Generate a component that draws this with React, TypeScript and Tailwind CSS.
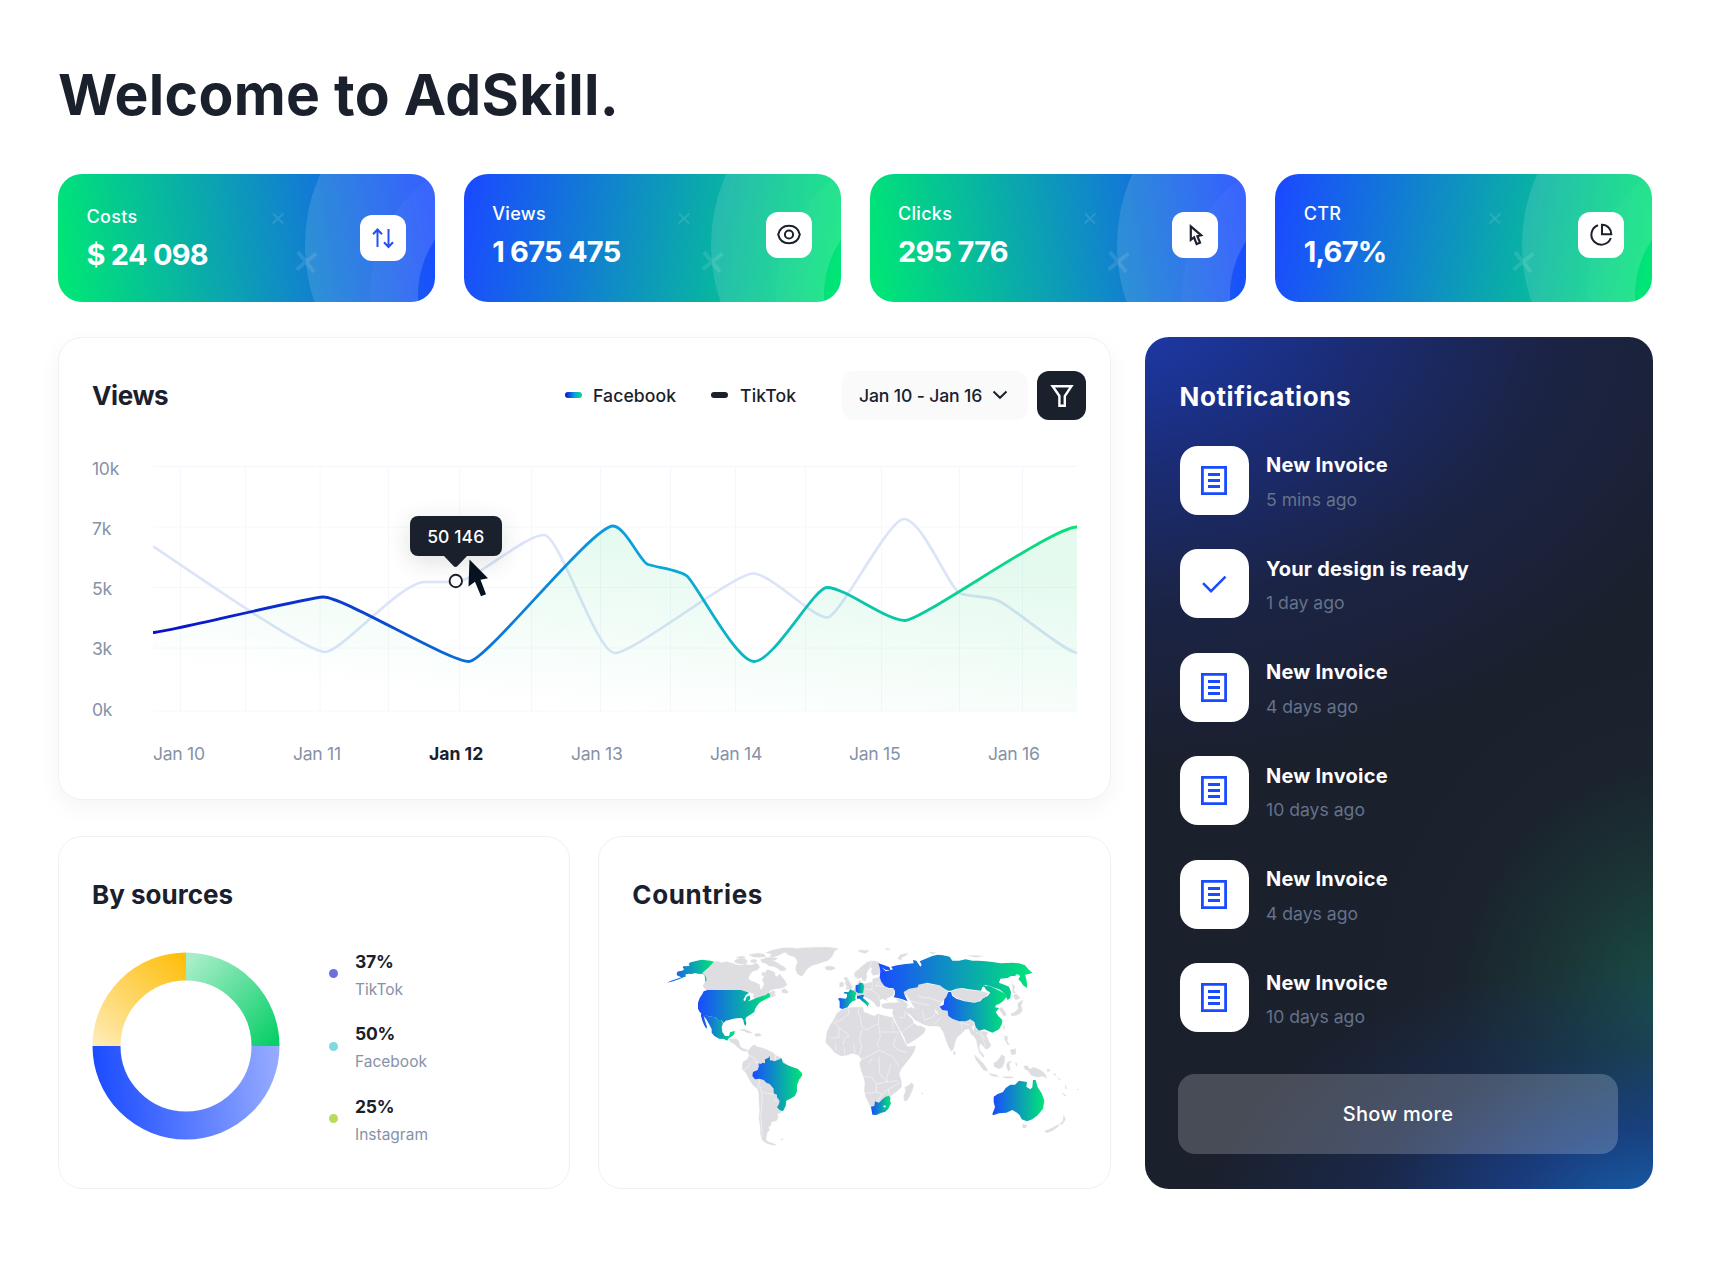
import type { ReactNode } from "react";

const INK = "#1b202d";

/* ---------- Stat cards ---------- */

function ArrowsIcon() {
  return (
    <svg width="26" height="26" viewBox="0 0 26 26" fill="none" stroke="#2450f5" strokeWidth="2">
      <path d="M7.5 22V4.5M3 9.2l4.5-4.7L12 9.2M18.500 4v17.5M14 17.3l4.500 4.7L23 17.3" />
    </svg>
  );
}

function EyeIcon() {
  return (
    <svg width="26" height="26" viewBox="0 0 26 26" fill="none" stroke={INK} strokeWidth="2">
      <path d="M2.200 12.500C3.500 6.800 7.700 3.700 13 3.700s9.500 3.100 10.800 8.800C22.500 18.200 18.300 21.300 13 21.300S3.500 18.200 2.200 12.500Z" />
      <circle cx="13" cy="12.500" r="4.100" />
    </svg>
  );
}

function PointerIcon() {
  return (
    <svg width="26" height="26" viewBox="0 0 26 26" fill="none" stroke={INK} strokeWidth="2.200" strokeLinejoin="miter">
      <path d="M8.800 4.400v13.400l3.300-2.500 2.500 6.800 3.400-1.400-2.600-6.500 3.800-.9Z" />
    </svg>
  );
}

function PieIcon() {
  return (
    <svg width="26" height="26" viewBox="0 0 26 26" fill="none" stroke={INK} strokeWidth="2">
      <path d="M10 3.200A10 10 0 1 0 22.800 16M14 2.700V12.200h9.300C23.300 7 19.200 2.700 14 2.700Z" />
    </svg>
  );
}

interface StatProps {
  label: string;
  value: string;
  icon: ReactNode;
  tone: string;
  shift?: string;
}

function StatCard({ label, value, icon, tone, shift = "pt-[28px]" }: StatProps) {
  return (
    <div className={`relative flex h-[128px] items-start justify-between overflow-hidden rounded-[24px] pr-[28.500px] pl-[28.500px] text-white ${shift} ${tone}`}>
      <svg className="absolute inset-0" width="377" height="128" viewBox="0 0 377 128" fill="none">
        <path
          fillRule="evenodd"
          fill="#fff"
          fillOpacity="0.12"
          d="M247 71a174 174 0 1 0 348 0a174 174 0 1 0 -348 0ZM360 121a98 98 0 1 0 196 0a98 98 0 1 0 -196 0Z"
        />
        <circle cx="458" cy="121" r="122" stroke="#fff" strokeOpacity="0.030" strokeWidth="48" />
        <path d="m215 39.500 10 10M225.500 39.500l-11 10" stroke="#fff" strokeOpacity="0.120" strokeWidth="1.800" />
        <path d="m240 78 16 20M258.500 79.500l-20 16" stroke="#fff" strokeOpacity="0.110" strokeWidth="4" />
      </svg>
      <div className="relative">
        <div className="text-[18px] leading-6 font-medium tracking-[0.300px]">{label}</div>
        <div className="mt-[7.500px] text-[29px] leading-9 font-bold tracking-[-0.750px] whitespace-nowrap">{value}</div>
      </div>
      <div className="relative mt-[10px] flex size-[46px] items-center justify-center rounded-[12px] bg-white">{icon}</div>
    </div>
  );
}

/* ---------- Views chart ---------- */

const GRID_X = [180.5, 245.5, 320, 388.5, 459.5, 531.5, 600.5, 670.5, 735.5, 805.5, 881.5, 959.5, 1022.5];
const GRID_Y = [466.500, 527, 587.500, 648, 711];
const FACEBOOK =
  "M153 632.500C166 632.500 304 598 323 597C342 596 448 661.500 469 661.500C486 661.500 592 526 613 526C625 526 641 563 648 564.500C660 568 680 570 687 576C697 585 736 661.500 754 661.500C774 661.500 814 587.500 827 587.500C845 587.500 886 620.500 905 620.500C922 620.500 1052 527 1077 527";
const TIKTOK =
  "M153 546.500C166 554 304 652 325 652C342 652 400 582 425 582L455 582C474 582 524 535 544 535C560 535 596 653 615 653C634 653 734 573.500 753 573.500C771 573.500 812 617.500 827 617.500C840 617.500 888 519 904 519C922 519 949 588 960 593.500C971 597 990 596 999 601C1015 609 1062 650 1077 653";

function Chart() {
  return (
    <svg width="926" height="264" viewBox="153 456 926 264" fill="none" className="block">
      <defs>
        <linearGradient id="line" x1="153" y1="0" x2="1077" y2="0" gradientUnits="userSpaceOnUse">
          <stop stopColor="#0a0fc8" />
          <stop offset="0.22" stopColor="#0d40cf" />
          <stop offset="0.35" stopColor="#0a72d8" />
          <stop offset="0.5" stopColor="#0b9de0" />
          <stop offset="0.68" stopColor="#0cbcbc" />
          <stop offset="0.84" stopColor="#09cd9b" />
          <stop offset="1" stopColor="#0adf78" />
        </linearGradient>
        <linearGradient id="area" x1="590" y1="526" x2="570" y2="711" gradientUnits="userSpaceOnUse">
          <stop stopColor="#0cce6b" stopOpacity="0.110" />
          <stop offset="0.5" stopColor="#0cce6b" stopOpacity="0.055" />
          <stop offset="1" stopColor="#0cce6b" stopOpacity="0" />
        </linearGradient>
      </defs>
      <g stroke="#f4f8fc">
        {GRID_Y.map((y) => (
          <path key={y} d={`M153 ${y}H1077`} />
        ))}
        {GRID_X.map((x) => (
          <path key={x} d={`M${x} 466V711`} />
        ))}
      </g>
      <path d={TIKTOK} stroke="#dbe4f8" strokeWidth="2.700" />
      <path d={`${FACEBOOK}V711H153Z`} fill="url(#area)" />
      <path d={FACEBOOK} stroke="url(#line)" strokeWidth="2.800" />
      <circle cx="455.800" cy="581" r="6.200" fill="#fff" stroke={INK} strokeWidth="1.900" />
    </svg>
  );
}

function ChartTooltip() {
  return (
    <div className="absolute top-[60px] left-[257px]">
      <div className="flex h-[40.500px] w-[91.500px] items-center justify-center rounded-[8px] bg-[#1b202d] pt-[1.500px] text-[17.500px] font-medium tracking-[0.100px] text-white shadow-[0_6px_24px_rgba(27,32,45,0.14)]">
        50 146
      </div>
      <svg className="absolute top-[40px] left-[34px] overflow-visible" width="46" height="44" viewBox="0 0 46 44">
        <path d="M0 0h23L13.500 10q-2 2-4 0Z" fill={INK} />
        <path d="M25.500 3.500 44 22.200l-7.500 1.600 5.500 14.500-5 2-6-14.500-6.500 4.700Z" fill="#06121f" />
      </svg>
    </div>
  );
}

const DAYS = ["Jan 10", "Jan 11", "Jan 12", "Jan 13", "Jan 14", "Jan 15", "Jan 16"];

function ViewsCard() {
  return (
    <section className="h-[463px] rounded-[24px] border-[1.500px] border-[#edf2f9] bg-white pt-[33px] pl-[33px] shadow-[0_8px_24px_rgba(27,32,45,0.045)]">
      <header className="flex h-[49px] items-center pr-[23.500px] text-[17.600px] font-medium whitespace-nowrap text-[#1b202d]">
        <h2 className="pt-[2px] text-[26px] leading-8 font-bold tracking-[-0.400px]">Views</h2>
        <div className="ml-auto flex items-center">
          <span className="h-[6px] w-[17px] rounded-full bg-[linear-gradient(90deg,#0a0fc8,#0b9de0_55%,#0adf78)]" />
          <span className="ml-[11px] w-[84px] pt-[2px] tracking-[0.100px]">Facebook</span>
          <span className="ml-[34px] h-[6px] w-[17px] rounded-full bg-[#1b202d]" />
          <span className="ml-[12px] w-[56px] pt-[2px] tracking-[0.150px]">TikTok</span>
          <div className="ml-[46px] flex h-[49px] w-[186px] items-center rounded-[12px] bg-[#fafafa] pl-[17px]">
            <span className="w-[124px] pt-[2px] tracking-[-0.150px]">Jan 10 - Jan 16</span>
            <svg className="ml-[9px]" width="16" height="10" viewBox="0 0 16 10" fill="none" stroke={INK} strokeWidth="2">
              <path d="m1.500 1.500 6.500 6.300 6.500-6.300" />
            </svg>
          </div>
          <div className="ml-[9px] flex size-[49px] items-center justify-center rounded-[12px] bg-[#1b202d]">
            <svg className="mt-[2px]" width="24" height="24" viewBox="0 0 24 24" fill="none" stroke="#fff" strokeWidth="2.400">
              <path d="M2.600 2.300h18.800L14.800 12v9.700H9.400V12Z" />
            </svg>
          </div>
        </div>
      </header>
      <div className="mt-[36px] flex text-[17.600px] leading-6 text-[#8592a8]">
        <div className="mt-px flex h-[265px] w-[61px] flex-col justify-between tracking-[-0.300px]">
          {["10k", "7k", "5k", "3k", "0k"].map((t) => (
            <span key={t}>{t}</span>
          ))}
        </div>
        <div className="relative">
          <Chart />
          <ChartTooltip />
          <div className="mt-[22.500px] grid grid-cols-[140px_136px_142px_139px_139px_139px_auto] tracking-[-0.300px]">
            {DAYS.map((d) => (
              <span key={d} className={d === "Jan 12" ? "font-bold tracking-[0px] text-[#1b202d]" : ""}>
                {d}
              </span>
            ))}
          </div>
        </div>
      </div>
    </section>
  );
}

/* ---------- Sources ---------- */

function Donut() {
  return (
    <svg width="188" height="188" viewBox="-94 -94 188 188" fill="none">
      <defs>
        <linearGradient id="dg" x1="0" y1="-80" x2="85" y2="0" gradientUnits="userSpaceOnUse">
          <stop stopColor="#a6edc8" />
          <stop offset="1" stopColor="#08cf68" />
        </linearGradient>
        <linearGradient id="dy" x1="0" y1="-85" x2="-80" y2="10" gradientUnits="userSpaceOnUse">
          <stop stopColor="#fdbf0e" />
          <stop offset="1" stopColor="#ffecb8" />
        </linearGradient>
        <linearGradient id="db" x1="-94" y1="20" x2="90" y2="0" gradientUnits="userSpaceOnUse">
          <stop stopColor="#1a4bff" />
          <stop offset="1" stopColor="#96abff" />
        </linearGradient>
      </defs>
      <path d="M0-79.500A79.500 79.500 0 0 1 79.500 0" stroke="url(#dg)" strokeWidth="28" />
      <path d="M-79.500 0A79.500 79.500 0 0 1 0-79.500" stroke="url(#dy)" strokeWidth="28" />
      <path d="M79.500 0A79.500 79.500 0 0 1-79.500 0" stroke="url(#db)" strokeWidth="28" />
    </svg>
  );
}

const SOURCES = [
  { pct: "37%", name: "TikTok", dot: "bg-[#6b6fe0]" },
  { pct: "50%", name: "Facebook", dot: "bg-[#80d8e2]" },
  { pct: "25%", name: "Instagram", dot: "bg-[#b8dc5a]" },
];

function SourcesCard() {
  return (
    <section className="rounded-[24px] border-[1.500px] border-[#edf2f9] bg-white pt-[42px] pl-[33px]">
      <h2 className="text-[26px] leading-8 font-bold text-[#1b202d]">By sources</h2>
      <div className="mt-[41px] flex">
        <Donut />
        <ul className="-mt-[4px] ml-[49px] flex flex-col gap-[20.500px]">
          {SOURCES.map((s) => (
            <li key={s.name} className="flex h-[52px] items-center gap-[17px]">
              <span className={`size-[9px] rounded-full ${s.dot}`} />
              <div className="pt-[4px]">
                <div className="text-[17.500px] leading-7 font-bold tracking-[-0.200px] text-[#1b202d]">{s.pct}</div>
                <div className="text-[15.500px] leading-7 text-[#8592a8]">{s.name}</div>
              </div>
            </li>
          ))}
        </ul>
      </div>
    </section>
  );
}

/* ---------- Countries ---------- */

const AMERICAS_LAND = [
  "195,96 205,94 215,98 232,95 245,98 262,104 275,106 290,103 300,106 312,104 320,98 328,104 332,112 325,120 312,124 302,134 298,146 306,153 322,158 332,164 334,176 338,180 342,170 346,162 340,150 345,140 350,124 356,119 368,122 378,128 378,138 385,140 392,132 398,140 408,152 414,165 405,172 395,175 380,176 365,180 355,190 372,182 380,186 375,190 380,195 372,200 362,203 360,192 350,197 330,205 318,206 312,200 316,192 300,187 288,183 275,180 175,180 168,176 162,168 168,156 172,143 169,137 160,129 180,112",
  "258,90 272,85 288,86 296,95 290,102 270,101 256,97",
  "262,82 280,78 290,82 275,86",
  "306,90 318,88 325,93 315,98 305,96",
  "300,74 325,70 345,72 350,80 330,82 310,80",
  "335,88 350,86 368,90 385,98 395,105 405,110 412,118 405,122 395,122 388,116 380,112 370,108 360,108 350,100 338,97",
  "350,68 372,60 400,54 430,53 440,56 420,64 400,70 390,76 375,80 362,80 368,72",
  "345,84 365,82 385,84 380,90 360,90",
  "412,66 430,57 460,54 500,52 540,52 568,56 555,64 552,74 545,84 535,92 520,97 505,102 490,106 478,114 470,122 462,136 455,138 446,132 441,122 440,110 446,98 442,88 436,80 420,76 412,70",
  "528,112 540,108 555,110 558,116 545,121 532,119",
  "398,180 408,176 418,186 414,190 400,188",
  "340,126 350,130 346,138 338,136",
  "240,326 250,327 262,326 270,334 272,346 278,354 290,358 298,362 292,364 280,362 268,354 256,342 244,336",
  "272,300 285,297 300,303 310,309 298,309 285,303",
  "318,312 330,310 338,316 328,319 318,318",
  "394,628 402,626 400,630",
  "296,364 306,352 316,344 324,350 340,354 356,360 372,368 380,376 396,384 404,396 420,408 420,480 400,540 396,548 384,552 388,562 382,572 366,576 366,586 358,592 362,600 354,608 352,622 350,630 360,636 382,644 374,646 352,640 340,630 334,610 334,590 330,565 332,540 330,510 330,490 325,476 312,466 302,450 292,430 280,418 280,402 284,394 296,388 300,376",
];

const AMERICAS_ACTIVE = [
  "195,95 185,92 165,90 160,89 150,91 138,94 125,97 119,101 122,107 112,109 104,108 101,113 106,117 100,122 88,124 83,129 84,136 90,139 97,142 80,148 66,152 54,158 72,154 90,148 100,143 112,139 108,134 118,131 128,132 138,129 150,132 160,131 166,135 168,143 168,152 172,155 172,143 169,137 160,129 170,120 180,112",
  "175,180 275,180 288,184 300,188 290,196 283,210 288,214 293,200 302,196 304,206 298,214 308,210 322,204 340,198 352,194 358,188 364,194 362,202 350,208 338,214 330,220 322,230 318,238 316,246 306,253 292,262 289,268 292,280 290,288 285,282 283,270 278,264 262,265 250,267 240,270 230,272 224,279 216,270 208,270 200,262 186,260 176,258 162,254 152,246 147,236 147,218 152,204 160,192 164,184",
  "156,250 176,258 186,260 200,262 208,270 216,270 222,280 218,292 220,306 228,318 240,318 244,306 258,303 256,312 250,318 240,324 234,332 225,327 210,326 196,318 188,308 188,298 180,282 172,268 164,258 168,272 174,290 172,297 165,284 160,272 156,258",
  "334,402 342,398 348,400 348,388 358,384 362,378 364,390 376,394 392,388 397,384 402,398 416,406 432,412 446,416 458,428 460,436 450,450 444,466 444,484 438,498 424,506 412,512 410,528 402,544 392,540 384,532 390,522 392,512 384,502 384,494 374,490 374,476 362,462 352,458 344,450 332,446 318,448 310,438 312,426 326,420 330,408 326,398",
];

const OLD_WORLD_LAND = [
  "70,238 85,234 105,232 120,232 132,232 134,246 150,252 165,258 178,252 190,256 208,260 222,262 226,275 236,292 244,308 250,322 260,342 266,350 290,348 285,365 272,385 258,402 246,418 240,432 246,450 248,470 236,482 222,492 214,500 213,520 205,538 185,550 165,555 156,535 150,520 140,500 136,480 138,460 134,440 126,420 122,400 128,388 118,375 100,370 85,375 66,378 48,368 34,352 20,338 22,322 24,305 34,285 44,270 54,250",
  "278,458 284,466 280,480 272,498 264,512 256,512 254,498 260,484 258,472 270,466",
  "106,138 108,126 120,118 130,108 142,98 158,92 172,94 180,98 184,110 186,124 178,134 162,136 156,126 160,114 156,112 146,122 142,134 144,142 138,154 130,150 128,142 116,146",
  "74,144 84,142 90,152 96,164 102,170 96,178 80,178 84,170 78,160 80,152",
  "62,158 72,156 74,168 62,172",
  "104,180 112,166 122,150 128,160 136,162 150,158 162,156 160,148 170,144 182,142 184,150 196,168 208,176 222,176 228,184 222,196 206,204 200,206 206,212 195,208 188,206 182,212 184,222 180,232 172,228 164,216 152,208 140,202 130,196 112,198",
  "188,224 200,220 216,218 236,218 248,218 262,226 266,244 252,240 240,238 226,244 220,236 200,236 190,232",
  "226,238 240,234 256,240 266,254 280,268 284,280 296,288 306,288 320,296 314,310 296,324 270,340 264,342 256,322 244,300 232,278 224,260 220,246",
  "232,206 250,210 262,218 268,228 250,222 236,214",
  "250,232 264,236 276,232 290,238 310,240 330,236 345,240 352,250 366,258 372,262 372,276 364,290 350,288 330,288 316,284 300,276 288,270 276,256 264,248",
  "258,178 275,170 298,164 318,158 340,164 360,166 376,178 388,182 384,196 376,206 366,220 356,222 344,226 350,240 310,242 290,238 282,226 274,212 266,200 254,190",
  "340,224 366,220 362,232 372,238 388,240 390,258 400,264 416,272 430,276 440,274 448,268 460,270 466,284 458,292 464,306 476,322 480,340 476,326 468,320 456,312 450,296 440,298 428,310 414,322 408,336 404,356 396,364 388,348 380,328 374,308 366,296 360,282 366,262",
  "404,362 410,368 408,375 403,372",
  "466,290 480,304 496,304 506,308 502,318 508,330 516,346 510,354 500,358 492,348 484,340 480,350 484,364 496,378 492,382 482,368 476,350 472,330 462,314",
  "396,184 412,178 430,176 450,180 470,182 488,184 508,190 500,200 486,206 480,214 464,216 440,214 420,206 404,198",
  "540,236 548,232 560,248 562,256 554,258 546,246",
  "606,214 612,210 606,228 610,240 604,250 592,256 578,258 576,252 588,246 598,236 596,220",
  "582,196 592,192 604,204 590,210",
  "580,160 588,170 584,180 590,190 582,188",
  "552,290 557,288 556,300",
  "556,318 566,320 564,334 572,344 566,344 558,330",
  "574,360 590,356 590,372 578,374",
  "524,400 536,392 548,374 558,380 556,398 550,412 540,416 526,410",
  "466,374 478,386 492,400 504,416 506,424 494,420 482,404 470,388",
  "508,430 530,434 540,440 520,438",
  "550,440 576,440 584,444 560,444",
  "566,396 578,394 570,402 574,418 568,424 562,408",
  "590,396 594,402 592,410",
  "614,408 626,408 632,418 644,412 664,420 676,430 684,444 670,438 656,442 636,436 630,424 618,418",
  "684,416 694,420 686,426",
  "704,430 712,436 706,436",
  "716,442 726,450 720,448",
  "738,464 744,476 740,476",
  "728,488 742,496 738,498",
  "774,478 794,478 790,482",
  "610,584 624,584 620,594 612,594",
  "734,556 740,568 730,582 720,584 732,572",
  "676,604 700,594 716,584 720,588 700,602 684,608",
  "118,60 150,62 140,70 122,66",
  "198,56 214,57 206,60",
  "330,66 350,68 340,72",
  "448,76 490,78 470,82",
  "236,86 244,74 268,70 262,76 246,84 248,90",
  "308,488 312,492 308,492",
];

const OLD_WORLD_ACTIVE = [
  "57,206 62,204 80,206 84,200 84,192 74,190 76,186 88,186 94,178 104,182 112,188 110,196 108,206 112,210 100,214 92,222 86,232 70,237 62,234 62,214",
  "110,166 118,164 122,158 132,160 136,170 134,180 132,190 118,190 110,184",
  "114,198 130,194 136,196 132,204 142,212 150,220 146,230 140,222 128,212 122,206 114,206",
  "156,530 166,528 168,514 180,518 190,508 200,500 210,497 214,505 213,512 216,520 208,536 198,546 186,548 172,555 160,554",
  "178,100 192,104 212,112 214,120 200,120 188,112 200,124 222,118 216,110 234,106 260,102 284,100 282,90 292,92 304,110 308,104 302,94 320,86 340,78 356,74 372,76 392,80 400,92 420,92 440,88 460,92 478,92 500,94 520,96 545,100 580,98 600,100 618,106 628,118 640,128 630,132 618,134 622,148 624,162 624,174 612,166 606,156 598,148 604,138 594,132 588,138 576,138 566,144 544,146 540,158 556,164 570,170 576,186 574,204 566,210 560,198 552,186 540,178 520,172 500,166 490,172 486,182 470,180 450,178 430,174 412,176 396,182 388,182 376,176 362,166 342,162 324,158 298,164 296,172 270,176 254,186 258,198 266,214 250,208 236,204 224,202 228,192 228,182 222,174 210,174 196,168 186,154 182,142 184,124 182,112",
  "388,186 396,186 400,198 412,206 436,214 466,218 484,214 490,206 506,198 514,188 502,180 494,168 512,168 530,176 550,186 562,192 562,202 552,214 540,222 532,224 528,232 540,234 534,242 530,246 538,258 550,270 548,284 540,298 520,308 510,304 496,298 480,302 470,292 466,276 454,268 440,274 420,274 400,266 388,258 386,242 370,240 362,230 374,224 376,208 382,200",
  "524,500 536,492 552,486 560,474 574,464 588,464 600,452 624,456 622,470 634,478 640,472 642,450 650,450 656,472 668,490 676,512 672,536 656,556 640,568 624,574 608,568 602,556 594,548 580,540 562,548 540,550 522,556 520,552 528,532 524,516",
];

const BORDERS =
  "M88 236 90 252 70 268 46 278M120 234 118 248 124 262 128 290 142 300M46 278 60 292 60 322 34 324M60 292 90 316 76 326 72 344M142 300 178 280 180 256M178 280 184 320 174 340 180 352M222 262 222 300M184 306 240 306M232 322 222 344 236 360 264 368M128 300 122 330 128 350 122 376M104 340 108 370M76 350 78 374M48 340 52 362M128 388 158 374 180 360 222 380 240 410M150 400 160 384M136 440 160 442 172 462 172 486 140 490M180 382 182 430 204 456 204 440 216 404M172 462 204 456 236 452M172 486 190 492 208 478 240 458M190 492 176 512 166 528M208 478 212 496M160 160 158 180 180 196 180 212M136 176 158 180M184 152 170 166 196 170M160 92 150 116M274 212 300 220 330 226M310 240 316 270 340 262 352 246M366 262 344 286M404 264 428 280 450 284M428 282 428 296M284 280 262 296 250 308M258 244 256 262 240 262M298 200 330 204 366 216M470 306 488 318 500 350M484 306 500 330";

function Countries({ land, active }: { land: string[]; active: string[] }) {
  return (
    <>
      {land.map((p) => (
        <polygon key={p} points={p} fill="#dedde2" stroke="#dedde2" strokeWidth="1" strokeLinejoin="round" />
      ))}
      {active.map((p) => (
        <polygon key={p} points={p} fill="url(#map)" />
      ))}
    </>
  );
}

function CountriesCard() {
  return (
    <section className="rounded-[24px] border-[1.500px] border-[#edf2f9] bg-white pt-[42px] pl-[33px]">
      <h2 className="text-[26px] leading-8 font-bold tracking-[0.650px] text-[#1b202d]">Countries</h2>
      <svg className="mt-[19.500px] ml-[17px]" width="430" height="230" viewBox="0 0 1290 690">
        <defs>
          <linearGradient id="map">
            <stop stopColor="#1a4bff" />
            <stop offset="1" stopColor="#00e676" />
          </linearGradient>
        </defs>
        <Countries land={AMERICAS_LAND} active={AMERICAS_ACTIVE} />
        <path
          d="M300 376 318 386 330 404M282 420 296 414 304 398M330 402 316 394M332 448 328 476M334 470 340 500 336 560 340 620M340 484 352 490 374 492M364 380 364 392M380 376 378 392M374 510 384 514"
          stroke="#fff"
          strokeWidth="1.500"
          fill="none"
        />
        <g transform="translate(510 0)">
          <Countries land={OLD_WORLD_LAND} active={[]} />
          <path d={BORDERS} stroke="#fff" strokeWidth="2" strokeOpacity="0.700" strokeLinejoin="round" fill="none" />
          <Countries land={[]} active={OLD_WORLD_ACTIVE} />
          <ellipse cx="197" cy="529" rx="4" ry="3.500" fill="#dedde2" />
          <path d="M494 166 512 168 530 176 552 188" stroke="#e9fff5" strokeOpacity="0.500" strokeWidth="1.500" fill="none" />
        </g>
      </svg>
    </section>
  );
}

/* ---------- Notifications ---------- */

function InvoiceIcon() {
  return (
    <svg width="26" height="29" viewBox="0 0 26 29" fill="none" stroke="#1a4bff" strokeWidth="2.800">
      <path d="M1.400 1.400h23.200v26.200H1.400ZM7 8.500h12M7 14.500h12M7 20.500h12" />
    </svg>
  );
}

function DoneIcon() {
  return (
    <svg width="26" height="29" viewBox="0 0 26 29" fill="none" stroke="#1a4bff" strokeWidth="2.500">
      <path d="m2 14.200 8 8L24.500 7.600" />
    </svg>
  );
}

const NOTES = [
  { title: "New Invoice", time: "5 mins ago" },
  { title: "Your design is ready", time: "1 day ago", done: true },
  { title: "New Invoice", time: "4 days ago" },
  { title: "New Invoice", time: "10 days ago" },
  { title: "New Invoice", time: "4 days ago" },
  { title: "New Invoice", time: "10 days ago" },
];

function Notifications() {
  return (
    <aside className="rounded-[24px] bg-[#1b202d] bg-[radial-gradient(460px_270px_at_102%_104%,#1566b4_0%,rgba(24,66,150,0.750)_35%,rgba(25,50,110,0.400)_65%,rgba(27,32,45,0)_100%),radial-gradient(320px_360px_at_106%_80%,rgba(24,92,76,0.900)_0%,rgba(26,68,58,0.600)_40%,rgba(27,44,48,0.350)_70%,rgba(27,32,45,0)_100%),radial-gradient(660px_470px_at_-4%_-4%,#1c3bb0_0%,rgba(27,46,130,0.850)_35%,rgba(27,38,85,0.600)_65%,rgba(27,32,45,0)_100%)] pt-[44.500px] pl-[34.500px] text-white">
      <h2 className="text-[26px] leading-8 font-bold tracking-[0.600px]">Notifications</h2>
      <ul className="mt-[32.500px] flex flex-col gap-[34.500px]">
        {NOTES.map((n, i) => (
          <li key={i} className="flex h-[69px] gap-[17.500px]">
            <div className="flex size-[69px] items-center justify-center rounded-[18px] bg-white">
              {n.done ? <DoneIcon /> : <InvoiceIcon />}
            </div>
            <div className="pt-[5.500px] whitespace-nowrap">
              <div className="text-[20px] leading-7 font-bold tracking-[0.220px]">{n.title}</div>
              <div className="mt-[8.500px] text-[17.600px] leading-6 text-[#64728a]">{n.time}</div>
            </div>
          </li>
        ))}
      </ul>
      <button className="mt-[41.500px] -ml-[1.500px] h-[80.500px] w-[440px] rounded-[17px] bg-white/20 text-[20px] font-medium tracking-[0.350px]">
        Show more
      </button>
    </aside>
  );
}

export default function App() {
  return (
    <main className="h-[1278px] w-[1710px] overflow-hidden bg-white px-[58px] pt-[62.500px] font-['Inter',sans-serif]">
      <h1 className="text-[57px] leading-[64px] font-bold tracking-[0.300px] text-[#1b202d]">Welcome to AdSkill.</h1>
      <div className="mt-[47.500px] grid grid-cols-4 gap-x-[29px]">
        <StatCard label="Costs" value="$ 24 098" icon={<ArrowsIcon />} shift="pt-[31px]" tone="bg-[linear-gradient(80deg,#00e676_2%,#1a4bff_98%)]" />
        <StatCard label="Views" value="1 675 475" icon={<EyeIcon />} tone="bg-[linear-gradient(100deg,#1a4bff_2%,#00e676_98%)]" />
        <StatCard label="Clicks" value="295 776" icon={<PointerIcon />} tone="bg-[linear-gradient(80deg,#00e676_2%,#1a4bff_98%)]" />
        <StatCard label="CTR" value="1,67%" icon={<PieIcon />} tone="bg-[linear-gradient(100deg,#1a4bff_2%,#00e676_98%)]" />
      </div>
      <div className="mt-[34.500px] grid h-[852px] grid-cols-[1052.500px_507.500px] gap-x-[34.500px]">
        <div className="flex flex-col gap-[36px]">
          <ViewsCard />
          <div className="grid flex-1 grid-cols-2 gap-x-[28px]">
            <SourcesCard />
            <CountriesCard />
          </div>
        </div>
        <Notifications />
      </div>
    </main>
  );
}
